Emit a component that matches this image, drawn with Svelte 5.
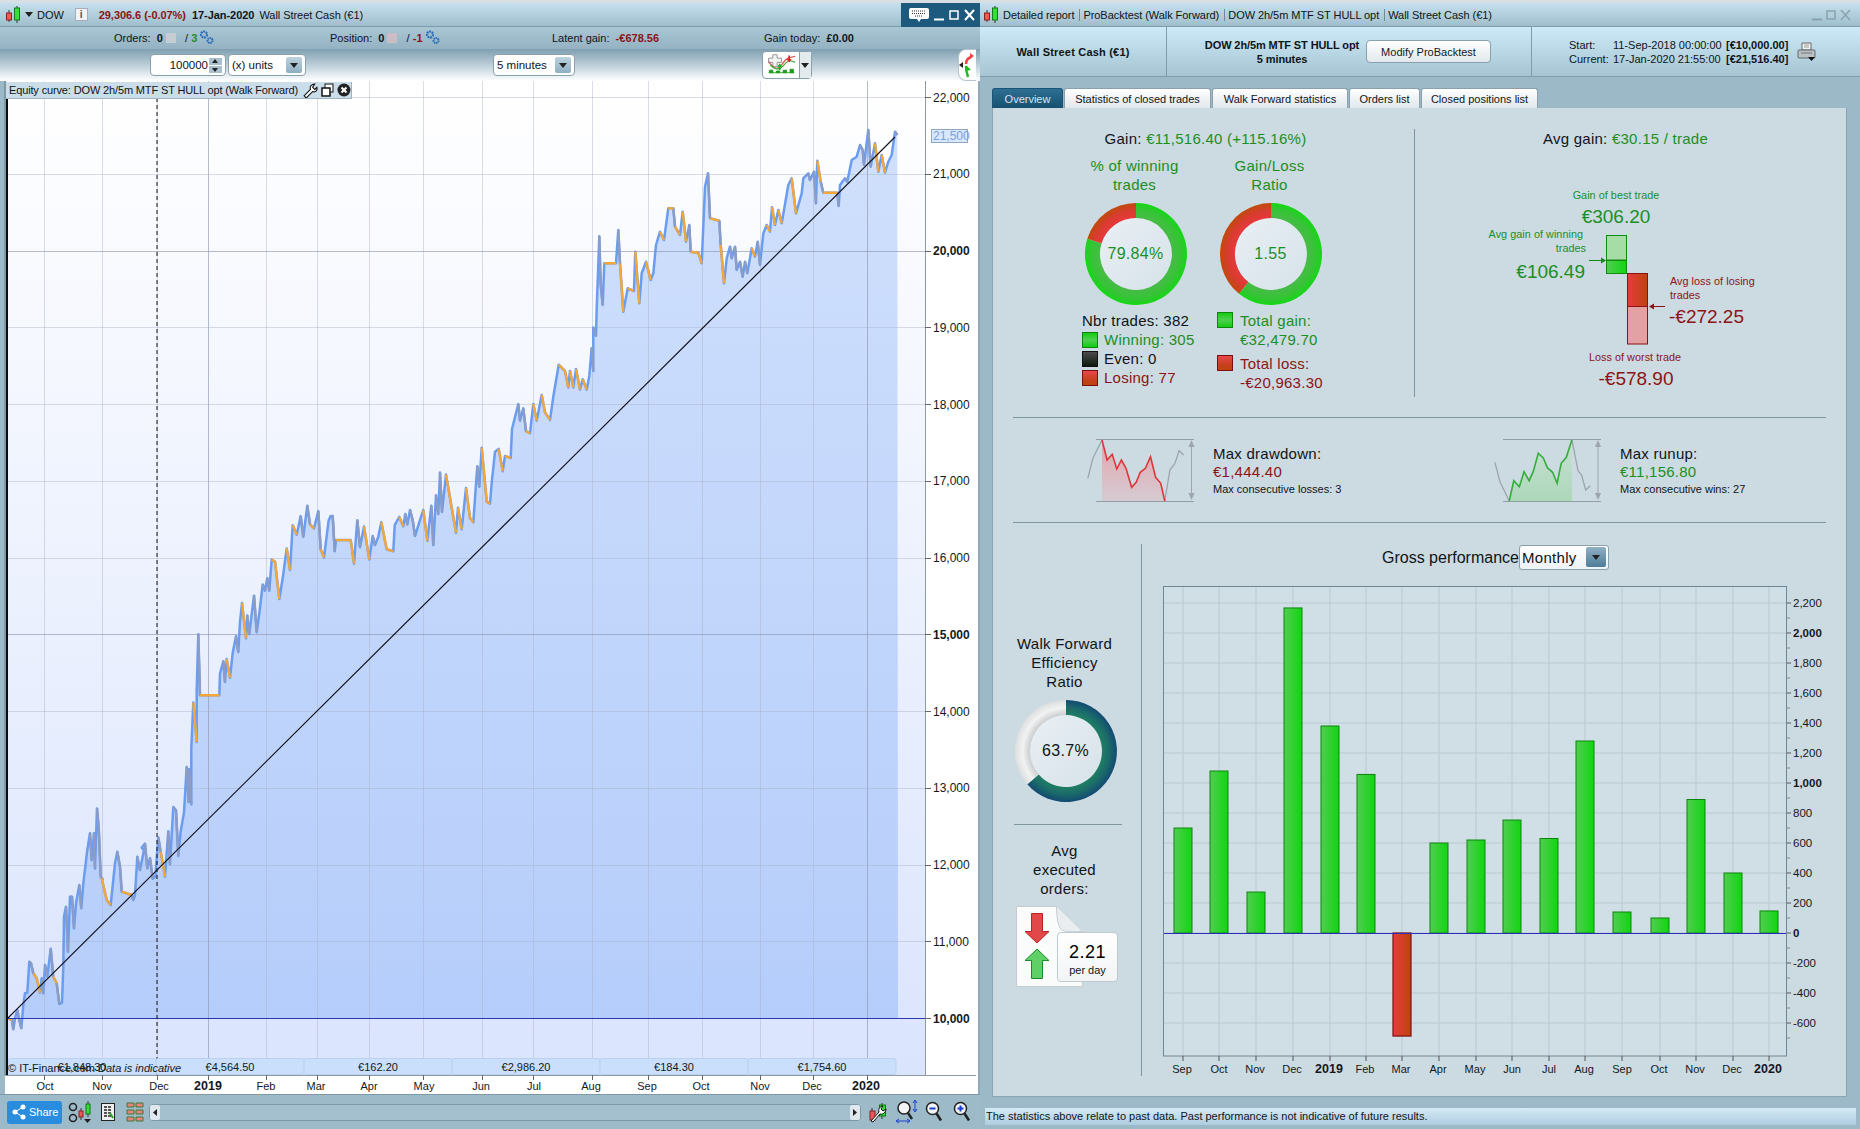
<script>
  const z10 = [24,505,36,510,40,538,45,505,52,480,58,510,64,535,70,465,75,430,82,428,88,335,93,340,100,370,110,385,120,428,125,385,130,430,135,345,142,380,152,296,160,380,170,400,178,462,186,458,190,350,192,200,198,170,204,305,210,140,216,140,222,235,228,160,238,105,244,175,250,100,262,0];
  const a12 = [0,1455,5,1520,12,1455,15,1540,21,1395,26,1440,32,1560,38,1566];
  const b10 = [305,85,320,150,332,165,345,40,352,5,360,50,365,125,395,135,400,150,405,135,412,20,420,60,432,0];
  const c12 = [155,1490,165,1480,172,1540,180,1515,188,1565,196,1560,205,1465,212,1500,225,1560,235,1450,240,1530,250,1392,258,1400,265,1510,272,1450,282,1405,290,1295,296,1380,298,1300,304,1385,304,1250,310,1140,320,1235,320,1110,325,975,330,1122,388,1122,390,1070,400,1040,405,1090,410,1035,420,1080,428,1020,438,980,445,1018,450,945,456,900,468,985,472,930,478,975,492,882,500,970,508,925,518,855,525,870,532,840,538,870,545,795,555,800,568,890,578,840,590,768,600,820,608,712,620,735,632,690,640,740,652,665,660,710,672,720,685,678,692,770,702,790,716,700,722,690,728,690,734,775,738,748,782,748,792,805,802,700,810,765,822,715,838,795,848,738,855,760,865,740,874,705,890,770,910,775,914,712,928,692,940,715,946,685,952,710,960,675,968,700,975,738,990,700,1000,675,1012,750,1024,665,1030,760,1038,640,1045,685,1050,585,1056,680,1068,590,1085,670,1098,730,1104,670,1115,722,1128,622,1140,695,1150,705,1162,570,1168,620,1175,525,1190,655,1200,660,1205,610,1215,535,1226,528,1238,582,1245,545,1262,550,1266,480,1285,420,1290,460,1300,430,1308,485,1320,490,1330,420,1340,460,1355,398,1365,440,1380,458,1390,402,1406,325,1425,340,1435,380,1440,340,1450,380,1458,335,1470,385,1478,360,1490,385,1498,352,1505,285,1510,340,1510,235,1518,255,1520,190,1528,15];
  const d11 = [122,465,128,525,133,400,168,400,175,300,180,400,190,545,203,475,222,483,226,365,238,520,245,430,258,395,272,450,280,430,288,345,300,305,312,330,325,235,340,235,345,290,360,315,368,245,378,335,388,285,392,365,415,368,425,400,435,170,444,130,450,265,478,272,482,345,492,460,500,385,510,350,515,385,525,350,530,420,540,395,548,440,555,395,562,430,575,355,585,380,593,335,600,405,610,310,620,285,630,305,636,232,645,285,655,240,665,280,672,240,685,165,695,145,708,250,725,190,730,145,745,130,750,150,762,125,768,220,772,92,782,155,790,188,832,188,836,228,840,165,855,145,862,155,875,90,890,80,900,45,908,60,912,105,925,0,932,110,945,40,955,125,965,75,975,128,985,95,995,75,1005,5,1012,15];
  function conv(a, f) { const o = []; for (let i = 0; i < a.length; i += 2) o.push(f(a[i], a[i + 1])); return o; }
  const m10 = (x, y) => [x / 3, 850 + y / 3];
  const m12 = (x, y) => [90 + x / 3, 230 + y / 2.412];
  const m11 = (x, y) => [560 + x / 3, 130 + y / 3];
  const curve = [[8, 1018], ...conv(z10, m10), ...conv(a12, m12), ...conv(b10, m10), ...conv(c12, m12), ...conv(d11, m11)];
  const f = (n) => n.toFixed(1);
  const blueD = 'M' + curve.map((p) => f(p[0]) + ' ' + f(p[1])).join('L');
  const areaD = blueD + 'L898 1018L8 1018Z';
  let orangeD = '', greyD = '';
  for (let i = 1; i < curve.length; i++) {
    const [x0, y0] = curve[i - 1], [x1, y1] = curve[i];
    if (y1 >= y0 - 0.5) {
      const seg = `M${f(x0)} ${f(y0)}L${f(x1)} ${f(y1)}`;
      if (x1 - x0 >= 3) orangeD += seg; else greyD += seg;
    }
  }
  const hLines = [22000,21000,20000,19000,18000,17000,16000,15000,14000,13000,12000,11000].map((v) => ({ v, y: 97 + (22000 - v) * 0.07675 }));
  const axisTicks = [...hLines, { v: 10000, y: 1018 }];
  const fmt = (v) => v.toLocaleString('en-US');
  const major = (v) => v === 20000 || v === 15000 || v === 10000;
  const xLabels = [['Oct',45,44],['Nov',102,102],['Dec',159,157],['2019',208,208],['Feb',266,266],['Mar',316,317],['Apr',369,369],['May',424,423],['Jun',481,482],['Jul',534,533],['Aug',591,592],['Sep',647,648],['Oct',701,702],['Nov',760,760],['Dec',812,813],['2020',866,867]];
  const segs = [['€1,848.30',8],['€4,564.50',156],['€162.20',304],['€2,986.20',452],['€184.30',600],['€1,754.60',748]];

  const bars = [['Sep',700],['Oct',1080],['Nov',273],['Dec',2167],['2019',1380],['Feb',1057],['Mar',-687],['Apr',600],['May',620],['Jun',753],['Jul',630],['Aug',1280],['Sep',140],['Oct',100],['Nov',890],['Dec',400],['2020',147]];
  const barX = [1184,1220,1257,1294,1331,1367,1403,1440,1477,1513,1550,1586,1623,1661,1697,1734,1770];
  const barLx = [1183,1220,1256,1293,1330,1366,1402,1439,1476,1513,1550,1585,1623,1660,1696,1733,1769];
  const yVals = [2200,2000,1800,1600,1400,1200,1000,800,600,400,200,0,-200,-400,-600];
  const yOf = (v) => 933 - v * 0.15;
  const minor = [2100,1900,1700,1500,1300,1100,900,700,500,300,100,-100,-300,-500,-700];

  function arc(r0, r1, from, to) {
    const rad = (d) => ((d - 90) * Math.PI) / 180;
    const p = (r, d) => `${f(r * Math.cos(rad(d)))} ${f(r * Math.sin(rad(d)))}`;
    const big = to - from > 180 ? 1 : 0;
    return `M${p(r1, from)}A${r1} ${r1} 0 ${big} 1 ${p(r1, to)}L${p(r0, to)}A${r0} ${r0} 0 ${big} 0 ${p(r0, from)}Z`;
  }
  const sp = (a) => { const o = []; for (let i = 0; i < a.length; i += 2) o.push(`${f(1000 + a[i] / 1.96)},${f(420 + a[i + 1] / 3)}`); return o.join(' '); };
  const s1a = sp([172,175,182,115,200,60]);
  const s1r = sp([200,60,210,120,220,103,229,147,238,120,247,145,258,202,267,187,275,157,285,145,295,110,305,172,315,190,323,243]);
  const s1b = sp([323,243,333,150,343,130,351,92,360,105]);
  const s2a = sp([970,127,980,185,998,243]);
  const s2g = sp([998,243,1007,182,1018,200,1027,155,1037,182,1045,155,1055,100,1065,115,1073,143,1083,157,1092,190,1100,130,1110,112,1121,60]);
  const s2b = sp([1121,60,1133,153,1140,165,1148,210,1157,197]);
</script>

{#snippet donut(value, cls, a, b, split)}
  <div class="donut">
    <svg width="104" height="104" viewBox="-52 -52 104 104">
      <circle r="37" fill="url(#dcenter)" />
      <path d={arc(36, 51, 0, split)} fill={`url(#${a})`} />
      <path d={arc(36, 51, split, 359.99)} fill={`url(#${b})`} />
    </svg>
    <span class={cls}>{value}</span>
  </div>
{/snippet}

{#snippet candle()}
  <svg class="candle" width="17" height="20" viewBox="0 0 17 20">
    <path d="M4 5v12M12 1v17" stroke="#333" stroke-width="1" />
    <rect x="1.5" y="8" width="5" height="7" fill="#ef5a50" stroke="#8a2020" />
    <rect x="9.5" y="3" width="5" height="12" fill="#33e03a" stroke="#157a1a" />
  </svg>
{/snippet}

{#snippet gears()}
  <svg class="gears" width="16" height="16" viewBox="0 0 16 16">
    <circle cx="6" cy="5.500" r="3" fill="none" stroke="#2468b8" stroke-width="2.200" stroke-dasharray="1.800 .8" />
    <circle cx="12" cy="11.500" r="2.500" fill="none" stroke="#2468b8" stroke-width="2" stroke-dasharray="1.500 .7" />
  </svg>
{/snippet}

{#snippet ddArrow()}
  <span class="ddbtn"><svg width="8" height="5" viewBox="0 0 8 5"><path d="M0 0h8L4 5z" fill="#222" /></svg></span>
{/snippet}

<svg class="defs" aria-hidden="true">
  <defs>
    <radialGradient id="dgreen" gradientUnits="userSpaceOnUse" cx="0" cy="0" r="51"><stop offset=".7" stop-color="#48bb48" /><stop offset=".88" stop-color="#35c435" /><stop offset="1" stop-color="#14d814" /></radialGradient>
    <radialGradient id="dred" gradientUnits="userSpaceOnUse" cx="0" cy="0" r="51"><stop offset=".7" stop-color="#e8383c" /><stop offset=".85" stop-color="#d83c30" /><stop offset="1" stop-color="#c04a0c" /></radialGradient>
    <radialGradient id="dteal" gradientUnits="userSpaceOnUse" cx="0" cy="0" r="51"><stop offset=".7" stop-color="#1f7f62" /><stop offset=".85" stop-color="#1a6a6a" /><stop offset="1" stop-color="#134a72" /></radialGradient>
    <radialGradient id="dgrey" gradientUnits="userSpaceOnUse" cx="0" cy="0" r="51"><stop offset=".7" stop-color="#c9cccd" /><stop offset=".85" stop-color="#f2f2f2" /><stop offset="1" stop-color="#dcdfe0" /></radialGradient>
    <linearGradient id="dcenter" x1="0" y1="0" x2="1" y2="1"><stop offset="0" stop-color="#e9f0f5" /><stop offset="1" stop-color="#d6e1e9" /></linearGradient>
    <linearGradient id="plotbg" x1="0" y1="0" x2="0" y2="1"><stop offset="0" stop-color="#ffffff" /><stop offset="1" stop-color="#dae4fd" /></linearGradient>
    <linearGradient id="areabg" x1="0" y1="0" x2="0" y2="1"><stop offset="0" stop-color="#d0e0fc" /><stop offset="1" stop-color="#b5cdfb" /></linearGradient>
    <linearGradient id="bgreen"><stop offset="0" stop-color="#52cd52" /><stop offset="1" stop-color="#10d510" /></linearGradient>
    <linearGradient id="bred"><stop offset="0" stop-color="#e63c3e" /><stop offset="1" stop-color="#bd430c" /></linearGradient>
    <linearGradient id="sred" x1="0" y1="0" x2="0" y2="1"><stop offset="0" stop-color="#e3a5ab" /><stop offset="1" stop-color="#d6cbd3" /></linearGradient>
    <linearGradient id="sgreen" x1="0" y1="0" x2="0" y2="1"><stop offset="0" stop-color="#c9dfd6" /><stop offset="1" stop-color="#acd8b8" /></linearGradient>
  </defs>
</svg>

<div class="root">
  <section class="wleft">
    <div class="titlebar">
      <span class="m6">{@render candle()}</span>
      <svg class="m3" width="8" height="5" viewBox="0 0 8 5"><path d="M0 0h8L4 5z" fill="#222" /></svg>
      <span class="m4">DOW</span>
      <span class="info">i</span>
      <b class="red m12">29,306.6 (-0.07%)</b>
      <b class="m8">17-Jan-2020</b>
      <span class="m5">Wall Street Cash (€1)</span>
      <span class="winctl dark">
        <svg width="20" height="14" viewBox="0 0 20 14"><rect width="20" height="11" rx="2" fill="#fff" /><path d="M3 3h14M3 5.500h14M6 8h8" stroke="#333" stroke-dasharray="1 1" /><path d="M8 11h4l-2 3z" fill="#fff" /></svg>
        <svg width="10" height="12" viewBox="0 0 10 12"><path d="M0 10.500h10" stroke="#fff" stroke-width="2" /></svg>
        <svg width="10" height="12" viewBox="0 0 10 12"><rect x="1" y="2" width="8" height="8" fill="none" stroke="#fff" stroke-width="1.500" /></svg>
        <svg width="11" height="12" viewBox="0 0 11 12"><path d="M1 1l9 10M10 1L1 11" stroke="#fff" stroke-width="2" /></svg>
      </span>
    </div>
    <div class="orders">
      <span class="og g1">Orders: &nbsp;<b>0</b><i class="xbox"></i>&nbsp;&nbsp;&nbsp;/ <b class="grn3">3</b>{@render gears()}</span>
      <span class="og g2">Position: &nbsp;<b>0</b><i class="xbox pink"></i>&nbsp;&nbsp;&nbsp;/ <b class="red">-1</b>{@render gears()}</span>
      <span class="og g3">Latent gain: &nbsp;<b class="red">-€678.56</b></span>
      <span class="og">Gain today: &nbsp;<b>£0.00</b></span>
    </div>
    <div class="toolbar">
      <span class="field f1"><span class="num">100000</span><span class="spin"><i></i><i class="dn"></i></span></span>
      <span class="field f2"><span>(x) units</span>{@render ddArrow()}</span>
      <span class="field f3"><span>5 minutes</span>{@render ddArrow()}</span>
      <span class="indic">
        <svg width="36" height="26" viewBox="0 0 36 26"><path d="M3 5h5V1h5v4h5v5h-5v5H8v-5H3z" fill="#f4f4f4" stroke="#888" /><path d="M3 9c6 8 10 11 15 4s6-8 16-10" fill="none" stroke="#d55" stroke-width="1.500" /><path d="M5 13c6 6 11 6 15 1s7-8 14-4" fill="none" stroke="#4a4" stroke-width="1.500" /><path d="M3 22h30M4 19h4v3H4zM12 20h4v2h-4zM20 19h4v3h-4zM28 18h4v4h-4z" stroke="#1a9a1a" fill="#1a9a1a" /><path d="M24 6l3 4 3-4h-2V2h-2v4z" fill="#d22" /><path d="M13 15l3-4 3 4h-2v4h-2v-4z" fill="#2a2" /></svg>
        <span class="indicdd"><svg width="8" height="5" viewBox="0 0 8 5"><path d="M0 0h8L4 5z" fill="#222" /></svg></span>
      </span>
      <span class="sidetab"><svg width="16" height="30" viewBox="0 0 16 30"><path d="M0 15l4-3v6z" fill="#222" /><path d="M7 14c0-4 2-6 5-7" fill="none" stroke="#e44" stroke-width="2.500" /><path d="M11 3l4 3-4 3z" fill="#e44" /><path d="M7 16c0 5 1 8 2 11" fill="none" stroke="#2b2" stroke-width="2.500" /><path d="M8 16l4 4-6 1z" fill="#2b2" /></svg></span>
    </div>
    <div class="chart">
      <svg class="plot" width="978" height="1013" viewBox="0 81 978 1013">
        <rect x="0" y="81" width="978" height="1013" fill="#fff" />
        <rect x="8" y="81" width="917" height="994" fill="url(#plotbg)" />
        <path d={areaD} fill="url(#areabg)" />
        {#each xLabels as l}
          <line x1={l[2] + 0.5} x2={l[2] + 0.5} y1="81" y2="1075" stroke={l[0].length === 4 ? '#8f96b0' : '#a6adc4'} stroke-opacity={l[0].length === 4 ? 0.65 : 0.42} />
        {/each}
        {#each hLines as h}
          <line x1="8" x2="925" y1={Math.round(h.y) + 0.5} y2={Math.round(h.y) + 0.5} stroke={major(h.v) ? '#8f96b0' : '#a6adc4'} stroke-opacity={major(h.v) ? 0.65 : 0.42} />
        {/each}
        <path d={blueD} fill="none" stroke="#6a9cf0" stroke-width="2.500" stroke-linejoin="round" />
        <path d={greyD} fill="none" stroke="#8c9cc4" stroke-width="2.400" />
        <path d={orangeD} fill="none" stroke="#f3a73a" stroke-width="2.400" />
        <line x1="8" y1="1018" x2="895" y2="137" stroke="#101018" stroke-width="1.100" />
        <line x1="8" x2="925" y1="1018.500" y2="1018.500" stroke="#2a35ae" stroke-width="1.200" />
        <line x1="157" x2="157" y1="98" y2="1075" stroke="#111" stroke-dasharray="4 3" />
        {#each segs as s}
          <rect x={s[1]} y="1058.500" width="148" height="16" rx="2" fill="#c9dffb" stroke="#b9d2f0" />
          <text class="t11" x={s[1] + 74} y="1071" text-anchor="middle">{s[0]}</text>
        {/each}
        <text class="t11" x="8" y="1072">© IT-Finance.com <tspan font-style="italic">Data is indicative</tspan></text>
        <rect x="0" y="81" width="5" height="1013" fill="#9cb9c8" />
        <rect x="4" y="81" width="2" height="994" fill="#7f9aa6" />
        <rect x="6" y="99" width="2" height="976" fill="#0c0c0c" />
        <line x1="5" x2="976" y1="1075.500" y2="1075.500" stroke="#8b9aa3" />
        <line x1="925.500" x2="925.500" y1="81" y2="1075" stroke="#8b9aa3" />
        {#each axisTicks as t}
          <line x1="925" x2="931" y1={Math.round(t.y) + 0.5} y2={Math.round(t.y) + 0.5} stroke="#666" />
          <text class={major(t.v) ? 'axb' : 'ax'} x="933" y={t.y + 4.500}>{fmt(t.v)}</text>
        {/each}
        <rect x="931.500" y="129.500" width="36" height="13" fill="#d9e8fb" stroke="#8ea8c2" />
        <text class="ax blue" x="933" y="140">21,500</text>
        {#each xLabels as l}
          <line x1={l[2] + 0.5} x2={l[2] + 0.5} y1="1075" y2="1080" stroke="#666" />
          <text class={l[0].length === 4 ? 'xb' : 't11'} x={l[1]} y="1090" text-anchor="middle">{l[0]}</text>
        {/each}
      </svg>
      <div class="eqtitle">
        <span class="eqt">Equity curve: DOW 2h/5m MTF ST HULL opt (Walk Forward)</span>
        <svg width="15" height="15" viewBox="0 0 14 14"><path d="M1 12l6-6c-1-3 1-5 4-5l-2 3 2 2 2-2c1 3-2 5-4 4l-6 6z" fill="#fff" stroke="#111" /></svg>
        <svg width="13" height="14" viewBox="0 0 13 14"><rect x="4" y="1" width="8" height="8" fill="#fff" stroke="#111" /><rect x="1" y="5" width="8" height="8" fill="#fff" stroke="#111" stroke-width="1.500" /></svg>
        <svg width="14" height="14" viewBox="0 0 14 14"><circle cx="7" cy="7" r="6.500" fill="#222" /><path d="M4.500 4.500l5 5M9.500 4.500l-5 5" stroke="#fff" stroke-width="2" /></svg>
      </div>
    </div>
    <div class="bottombar">
      <span class="share"><svg width="14" height="16" viewBox="0 0 14 16"><circle cx="11" cy="3" r="2.500" fill="#fff" /><circle cx="3" cy="8" r="2.500" fill="#fff" /><circle cx="11" cy="13" r="2.500" fill="#fff" /><path d="M11 3L3 8l8 5" fill="none" stroke="#fff" /></svg>Share</span>
      <svg class="bi1" width="24" height="26" viewBox="0 0 24 26"><circle cx="5" cy="8" r="3.500" fill="none" stroke="#222" stroke-width="1.500" /><circle cx="5" cy="19" r="3.500" fill="none" stroke="#222" stroke-width="1.500" /><path d="M13 9v12M20 2v16" stroke="#333" /><rect x="11" y="12" width="4" height="6" fill="#e55" stroke="#822" /><rect x="18" y="5" width="4" height="10" fill="#3d3" stroke="#171" /><path d="M16 20h7l-3.500 4z" fill="#222" /></svg>
      <svg class="bi2" width="14" height="18" viewBox="0 0 14 18"><rect x=".5" y=".5" width="13" height="17" fill="#eee" stroke="#222" /><path d="M3 4h8M3 7h8M3 10h8M3 13h8" stroke="#222" stroke-width="1.500" stroke-dasharray="3 1" /><path d="M9 10l3 5" stroke="#2a2" stroke-width="2" /></svg>
      <svg class="bi3" width="18" height="20" viewBox="0 0 18 20"><path d="M1 1h7v4H1zM10 1h7v4h-7zM1 8h7v4H1zM10 8h7v4h-7zM1 15h7v4H1zM10 15h7v4h-7z" fill="#e8837a" stroke="#3a7a3a" /></svg>
      <div class="scroll">
        <span class="sb"><svg width="4" height="7" viewBox="0 0 4 7"><path d="M4 0v7L0 3.500z" fill="#222" /></svg></span>
        <span class="sb"><svg width="4" height="7" viewBox="0 0 4 7"><path d="M0 0v7l4-3.500z" fill="#222" /></svg></span>
      </div>
      <svg class="bi4" width="18" height="26" viewBox="0 0 18 26"><path d="M3 9v14M13 4v16" stroke="#333" /><rect x="1" y="12" width="5" height="9" fill="#e55" stroke="#822" /><rect x="10.500" y="6" width="6" height="11" fill="#3d3" stroke="#171" /><path d="M2 22l8-9c-1-3 1-6 4-6l-2 3 2 2 3-2c0 3-3 6-6 5l-7 8z" fill="#fff" stroke="#111" /></svg>
      <svg class="bi5" width="22" height="24" viewBox="0 0 22 24"><circle cx="8" cy="8" r="6" fill="#f2f4f6" stroke="#222" stroke-width="1.500" /><path d="M12 13l4 6" stroke="#222" stroke-width="2.500" /><path d="M19 1v10M17 3l2-3 2 3M17 9l2 3 2-3M1 21h12M3 19l-3 2 3 2M11 19l3 2-3 2" stroke="#1a3fd0" fill="none" /></svg>
      <svg class="bi6" width="18" height="22" viewBox="0 0 18 22"><circle cx="7.500" cy="7.500" r="6" fill="#f2f4f6" stroke="#222" stroke-width="1.500" /><path d="M11.500 12.500l4.500 7" stroke="#222" stroke-width="2.500" /><path d="M4.500 7.500h6" stroke="#1a3fd0" stroke-width="2" /></svg>
      <svg class="bi7" width="18" height="22" viewBox="0 0 18 22"><circle cx="7.500" cy="7.500" r="6" fill="#f2f4f6" stroke="#222" stroke-width="1.500" /><path d="M11.500 12.500l4.500 7" stroke="#222" stroke-width="2.500" /><path d="M4.500 7.500h6M7.500 4.500v6" stroke="#1a3fd0" stroke-width="2" /></svg>
    </div>
  </section>

  <section class="wright">
    <div class="titlebar rt">
      <span class="m4b">{@render candle()}</span>
      <span class="crumb">Detailed report</span><span class="crumb">ProBacktest (Walk Forward)</span><span class="crumb">DOW 2h/5m MTF ST HULL opt</span><span class="crumb last">Wall Street Cash (€1)</span>
      <span class="winctl grey">
        <svg width="10" height="12" viewBox="0 0 10 12"><path d="M0 10.500h10" stroke="#8ba2ae" stroke-width="2" /></svg>
        <svg width="10" height="12" viewBox="0 0 10 12"><rect x="1" y="2" width="8" height="8" fill="none" stroke="#8ba2ae" stroke-width="1.500" /></svg>
        <svg width="11" height="12" viewBox="0 0 11 12"><path d="M1 1l9 10M10 1L1 11" stroke="#8ba2ae" stroke-width="1.500" /></svg>
      </span>
    </div>
    <div class="rhead">
      <div class="cell c1"><b class="wsc">Wall Street Cash (€1)</b></div>
      <div class="cell c2">
        <b class="sys">DOW 2h/5m MTF ST HULL opt<br />5 minutes</b>
        <button class="modify">Modify ProBacktest</button>
      </div>
      <div class="cell c3">
        <div class="dates">
          <span>Start:</span><span class="dr">11-Sep-2018 00:00:00</span><b>[€10,000.00]</b>
          <span>Current:</span><span class="dr">17-Jan-2020 21:55:00</span><b>[€21,516.40]</b>
        </div>
        <svg class="printer" width="20" height="20" viewBox="0 0 20 20"><path d="M5 1h9v7H5z" fill="#f4f4f4" stroke="#666" /><path d="M7 3h5M7 5h5" stroke="#999" /><rect x="1" y="8" width="17" height="8" rx="1" fill="#b9c0c4" stroke="#666" /><path d="M4 11h11" stroke="#777" /><path d="M11 15h7l-3.500 4z" fill="#111" /></svg>
      </div>
    </div>
    <div class="tabs">
      <span class="tab on">Overview</span>
      <span class="tab w1">Statistics of closed trades</span>
      <span class="tab w2">Walk Forward statistics</span>
      <span class="tab w3">Orders list</span>
      <span class="tab w4">Closed positions list</span>
    </div>
    <div class="panel">
      <div class="top">
        <div class="gaincol">
          <div class="line gainl">Gain: <span class="g">€11,516.40 (+115.16%)</span></div>
          <div class="two">
            <div class="col">
              <div class="ttl g">% of winning<br />trades</div>
              {@render donut('79.84%', 'dv g', 'dgreen', 'dred', 287.4)}
              <div class="lst">
                <div class="lr">Nbr trades: 382</div>
                <div class="lr"><i class="sq sg"></i><span class="g">Winning: 305</span></div>
                <div class="lr"><i class="sq sk"></i><span>Even: 0</span></div>
                <div class="lr"><i class="sq sr"></i><span class="r">Losing: 77</span></div>
              </div>
            </div>
            <div class="col">
              <div class="ttl g">Gain/Loss<br />Ratio</div>
              {@render donut('1.55', 'dv g', 'dgreen', 'dred', 218.8)}
              <div class="lst">
                <div class="lr2"><i class="sq sg"></i><span class="g">Total gain:<br />€32,479.70</span></div>
                <div class="lr2 gapt"><i class="sq sr"></i><span class="r">Total loss:<br />-€20,963.30</span></div>
              </div>
            </div>
          </div>
        </div>
        <div class="avgcol">
          <div class="line avgl">Avg gain: <span class="g">€30.15 / trade</span></div>
          <svg class="diag" width="431" height="240" viewBox="1416 158 431 240">
            <text class="d11 gf" x="1617" y="198" text-anchor="middle">Gain of best trade</text>
            <text class="d19 gf" x="1617" y="222" text-anchor="middle">€306.20</text>
            <text class="d11 gf" x="1584" y="237" text-anchor="end">Avg gain of winning</text>
            <text class="d11 gf" x="1587" y="251" text-anchor="end">trades</text>
            <text class="d19 gf" x="1586" y="277" text-anchor="end">€106.49</text>
            <rect x="1607.500" y="234.500" width="20" height="24.500" fill="#a6dca6" stroke="#128a12" />
            <rect x="1607.500" y="259.500" width="20" height="13" fill="url(#bgreen)" stroke="#128a12" />
            <path d="M1590 259.500h13" stroke="#128a12" /><path d="M1607 259.500l-5-3v6z" fill="#128a12" />
            <rect x="1628.500" y="272.500" width="20" height="33" fill="url(#bred)" stroke="#8a1212" />
            <rect x="1628.500" y="305.500" width="20" height="37.500" fill="#e2a2a4" stroke="#8a1212" />
            <path d="M1653 305.500h13" stroke="#8a1212" /><path d="M1650 305.500l5-3v6z" fill="#8a1212" />
            <text class="d11 rf" x="1671" y="284">Avg loss of losing</text>
            <text class="d11 rf" x="1671" y="298">trades</text>
            <text class="d19 rf" x="1670" y="322">-€272.25</text>
            <text class="d11 rf" x="1636" y="360" text-anchor="middle">Loss of worst trade</text>
            <text class="d19 rf" x="1637" y="384" text-anchor="middle">-€578.90</text>
          </svg>
        </div>
      </div>
      <div class="hr"></div>
      <div class="mid">
        <div class="mitem i1">
          <svg width="112" height="70" viewBox="1085 435 112 70">
            <polygon points={`${s1r} 1164.800,501 1102,501`} fill="url(#sred)" />
            <path d="M1096 439.500h98M1096 501.500h98" stroke="#949ea5" stroke-width="1.200" />
            <polyline points={s1a} fill="none" stroke="#9ca5ab" stroke-width="1.300" />
            <polyline points={s1b} fill="none" stroke="#9ca5ab" stroke-width="1.300" />
            <polyline points={s1r} fill="none" stroke="#e0363a" stroke-width="1.600" />
            <path d="M1191.500 443v54" stroke="#9ca5ab" /><path d="M1191.500 440l3 7h-6zM1191.500 500l3-7h-6z" fill="#9ca5ab" />
          </svg>
          <div class="mtxt"><div class="ml">Max drawdown:</div><div class="ml r">€1,444.40</div><div class="ms">Max consecutive losses: 3</div></div>
        </div>
        <div class="mitem">
          <svg width="112" height="70" viewBox="1492 435 112 70">
            <polygon points={`${s2g} 1572,501 1509,501`} fill="url(#sgreen)" />
            <path d="M1503 439.500h98M1503 501.500h98" stroke="#949ea5" stroke-width="1.200" />
            <polyline points={s2a} fill="none" stroke="#9ca5ab" stroke-width="1.300" />
            <polyline points={s2b} fill="none" stroke="#9ca5ab" stroke-width="1.300" />
            <polyline points={s2g} fill="none" stroke="#34ad3a" stroke-width="1.600" />
            <path d="M1598 443v54" stroke="#9ca5ab" /><path d="M1598 440l3 7h-6zM1598 500l3-7h-6z" fill="#9ca5ab" />
          </svg>
          <div class="mtxt"><div class="ml">Max runup:</div><div class="ml g">€11,156.80</div><div class="ms">Max consecutive wins: 27</div></div>
        </div>
      </div>
      <div class="hr"></div>
      <div class="bot">
        <div class="wf">
          <div class="ttl">Walk Forward<br />Efficiency<br />Ratio</div>
          <div class="wfd">{@render donut('63.7%', 'dv', 'dteal', 'dgrey', 229.3)}</div>
          <div class="wfhr"></div>
          <div class="ttl avgo">Avg<br />executed<br />orders:</div>
          <div class="doc">
            <svg width="68" height="82" viewBox="0 0 68 82">
              <path d="M.5.500h40l26 25v55H.5z" fill="#fafbfb" stroke="#c4ccd1" />
              <path d="M40.500.500c0 12 2 22 6 24 6 2 14 1 20 1" fill="#e9edf0" stroke="#c4ccd1" />
              <path d="M15.500 7.500h11v18H33L21 37 9 25.500h6.500z" fill="#e2484a" stroke="#b22" />
              <path d="M15.500 72.500h11v-18H33L21 43 9 54.500h6.500z" fill="#5fd065" stroke="#1a8a2a" />
            </svg>
            <div class="bubble"><b>2.21</b><span>per day</span></div>
          </div>
        </div>
        <div class="gross">
          <div class="grow"><span class="glab">Gross performance</span><span class="sel"><span class="mth">Monthly</span>{@render ddArrow()}</span></div>
          <svg width="704" height="510" viewBox="1143 570 704 510">
            <rect x="1164.500" y="586.500" width="623" height="469.500" fill="#d0dee6" />
            {#each yVals as v}
              <line x1="1165" x2="1788" y1={yOf(v)} y2={yOf(v)} stroke="#bac9d2" />
            {/each}
            {#each barX as x}
              <line x1={x} x2={x} y1="587" y2="1056" stroke="#bac9d2" />
            {/each}
            {#each bars as b, i}
              {#if b[1] > 0}
                <rect x={barX[i] - 9} y={yOf(b[1])} width="18" height={b[1] * 0.15} fill="url(#bgreen)" stroke="#0d860d" />
              {:else}
                <rect x={barX[i] - 9} y="933" width="18" height={-b[1] * 0.15} fill="url(#bred)" stroke="#7d1010" stroke-width="1.200" />
              {/if}
            {/each}
            <line x1="1165" x2="1788" y1="933.500" y2="933.500" stroke="#2b2cc0" stroke-width="1.200" />
            <rect x="1164.500" y="586.500" width="623" height="469.500" fill="none" stroke="#6f8794" />
            {#each yVals as v}
              <line x1="1788" x2="1792" y1={yOf(v)} y2={yOf(v)} stroke="#555" />
              <text class={v === 0 || v === 1000 || v === 2000 ? 'byb' : 'by'} x="1794" y={yOf(v) + 4}>{v === 0 ? '0' : fmt(v)}</text>
            {/each}
            {#each minor as v}
              <line x1="1788" x2="1791" y1={yOf(v)} y2={yOf(v)} stroke="#888" />
            {/each}
            {#each bars as b, i}
              <line x1={barX[i]} x2={barX[i]} y1="1056" y2="1061" stroke="#555" />
              <text class={b[0].length === 4 ? 'xb' : 't11'} x={barLx[i]} y="1073" text-anchor="middle">{b[0]}</text>
            {/each}
          </svg>
        </div>
      </div>
    </div>
    <div class="status">The statistics above relate to past data. Past performance is not indicative of future results.</div>
  </section>
</div>

<style>
  :global(body) { margin: 0; background: #d8dfe4; font-family: "Liberation Sans", Arial, sans-serif; font-size: 11px; color: #101418; }
  .defs { position: absolute; width: 0; height: 0; }
  .root { display: flex; width: 1860px; height: 1129px; padding-top: 3px; box-sizing: border-box; overflow: hidden; background: #d8dfe4; }
  .wleft { width: 980px; height: 1126px; flex: none; display: flex; flex-direction: column; background: #8fabba; }
  .wright { width: 880px; height: 1126px; display: flex; flex-direction: column; background: #9cb9c8; }

  .titlebar { height: 24px; flex: none; display: flex; align-items: center; background: linear-gradient(#c6e0ed, #9fbecd); border-bottom: 1px solid #7f9cab; box-sizing: border-box; position: relative; letter-spacing: -.05px; }
  .m6 { margin-left: 5px; display: flex; } .m3 { margin-left: 3px; } .m4 { margin-left: 4px; } .m12 { margin-left: 11px; } .m8 { margin-left: 6px; } .m5 { margin-left: 5px; }
  .red { color: #8c1414; }
  .info { margin-left: 11px; width: 11px; height: 11px; background: #f0f3f5; border: 1px solid #aab; text-align: center; line-height: 11px; font-size: 10px; font-weight: bold; color: #555; box-sizing: content-box; }
  .winctl { position: absolute; right: 0; top: 0; height: 24px; display: flex; align-items: center; gap: 5px; padding: 0 3px 0 6px; box-sizing: border-box; }
  .dark { background: #1d5a7e; width: 79px; padding-left: 8px; }
  .grey { right: 6px; gap: 4px; }
  .orders { height: 22px; flex: none; display: flex; align-items: center; padding-left: 114px; background: linear-gradient(#a9c6d4, #94b2c2); box-sizing: border-box; }
  .og { display: flex; align-items: center; white-space: pre; }
  .g1 { width: 216px; } .g2 { width: 222px; } .g3 { width: 212px; }
  .grn3 { color: #2a8a2a; }
  .gears { margin-left: 1px; margin-bottom: 2px; }
  .xbox { width: 10px; height: 10px; background: #c5cdd2; margin-left: 3px; display: inline-block; }
  .pink { background: #ccbcc6; }
  .toolbar { height: 32px; flex: none; display: flex; align-items: center; background: linear-gradient(#7f9fb1, #c9d8e0 60%, #fff); position: relative; border-bottom: 0; box-sizing: border-box; }
  .field { height: 22px; box-sizing: border-box; background: #fff; border: 1px solid #8aa0ad; border-radius: 4px; display: flex; align-items: center; padding-left: 3px; justify-content: space-between; font-size: 11.500px; }
  .f1 { margin-left: 150px; width: 76px; padding-left: 0; }
  .num { flex: 1; text-align: right; padding-right: 1px; }
  .spin { width: 13px; display: flex; flex-direction: column; gap: 1px; margin-right: 3px; }
  .spin i { height: 7px; background: #a8c0ce; position: relative; display: block; }
  .spin i::after { content: ""; position: absolute; left: 3px; top: 1px; border: 3px solid transparent; border-top: 0; border-bottom: 4px solid #222; }
  .spin .dn::after { border-bottom: 0; border-top: 4px solid #222; top: 2px; }
  .f2 { margin-left: 2px; width: 78px; }
  .f3 { margin-left: 187px; width: 82px; }
  .ddbtn { width: 16px; height: 16px; margin-right: 3px; background: linear-gradient(#bcd2de, #8fb0c2); border-radius: 2px; display: flex; align-items: center; justify-content: center; }
  .indic { margin-left: 187px; width: 50px; height: 28px; box-sizing: border-box; background: #fff; border: 1px solid #8aa0ad; border-radius: 4px; display: flex; align-items: center; padding-left: 3px; }
  .indicdd { width: 13px; height: 26px; margin-left: 2px; background: #e3eaee; border-left: 1px solid #8aa0ad; display: flex; align-items: center; justify-content: center; }
  .sidetab { margin-left: 146px; width: 18px; height: 32px; background: #fff; border: 1px solid #b5c4ce; border-right: 0; border-radius: 8px 0 0 8px; box-sizing: border-box; display: flex; align-items: center; }

  .chart { height: 1013px; flex: none; position: relative; }
  .plot { display: block; }
  .plot text, .gross text { font-family: "Liberation Sans", Arial, sans-serif; fill: #14181c; }
  .t11 { font-size: 11px; }
  .ax { font-size: 12px; } .axb { font-size: 12px; font-weight: bold; }
  .plot text.blue { fill: #7ba0e2; }
  .xb { font-size: 12.500px; font-weight: bold; }
  .eqtitle { position: absolute; left: 6px; top: 1px; height: 17px; width: 346px; box-sizing: border-box; display: flex; align-items: center; gap: 3px; padding-left: 3px; background: #cbdde8; border: 1px solid #9cb3c1; border-top: 0; border-left: 0; font-size: 11px; white-space: nowrap; }
  .eqt { letter-spacing: -.14px; margin-right: 2px; }

  .bottombar { height: 35px; flex: none; display: flex; align-items: center; background: #9dbac9; border-top: 1px solid #7d98a6; box-sizing: border-box; }
  .share { margin-left: 7px; width: 55px; height: 23px; background: #2a8cdc; border-radius: 3px; color: #fff; display: flex; align-items: center; gap: 3px; padding-left: 5px; box-sizing: border-box; font-size: 11px; }
  .bi1 { margin-left: 6px; } .bi2 { margin-left: 9px; } .bi3 { margin-left: 11px; }
  .scroll { margin-left: 5px; width: 712px; height: 17px; box-sizing: border-box; border: 1px solid #7d98a6; border-radius: 4px; display: flex; justify-content: space-between; align-items: center; background: #a4bfcd; }
  .sb { width: 10px; height: 15px; background: #dfe8ed; display: flex; align-items: center; justify-content: center; border-radius: 2px; }
  .bi4 { margin-left: 8px; } .bi5 { margin-left: 9px; } .bi6 { margin-left: 7px; } .bi7 { margin-left: 10px; }

  .m4b { margin-left: 3px; display: flex; }
  .crumb { padding: 0 5px 0 3px; border-right: 1px solid #6f8a98; line-height: 12px; white-space: nowrap; }
  .crumb.last { border: 0; }
  .rhead { height: 50px; flex: none; display: flex; background: linear-gradient(#cdeaf8, #a6c4d2); border-bottom: 1px solid #7f9cab; box-sizing: border-box; }
  .cell { box-sizing: border-box; height: 49px; display: flex; align-items: center; border-right: 1px solid #7f9cab; }
  .c1 { width: 187px; justify-content: center; }
  .wsc { letter-spacing: .2px; }
  .c2 { width: 365px; padding-left: 37px; }
  .c3 { flex: 1; border: 0; padding-left: 37px; }
  .sys { width: 156px; text-align: center; line-height: 14px; white-space: nowrap; letter-spacing: -.1px; }
  .modify { margin-left: 6px; width: 125px; height: 23px; border: 1px solid #8aa0ad; border-radius: 4px; background: linear-gradient(#fff, #e2e8ec); font: 11px "Liberation Sans", Arial, sans-serif; color: #14181c; padding: 0; }
  .dates { display: grid; grid-template-columns: 44px 107px 61px; column-gap: 0; row-gap: 2px; white-space: nowrap; }
  .dates b { padding-left: 6px; box-sizing: border-box; width: 67px; }
  .dr { text-align: right; }
  .printer { margin-left: 16px; }
  .tabs { height: 31px; flex: none; box-sizing: border-box; padding: 11px 0 0 12px; display: flex; gap: 0; }
  .tab { height: 20px; line-height: 20px; box-sizing: border-box; text-align: center; background: linear-gradient(#fff, #e0e7eb); border: 1px solid #8aa0ad; border-bottom: 0; border-radius: 3px 3px 0 0; margin-right: 1px; }
  .tab.on { width: 71px; background: linear-gradient(#2d6f93, #175070); color: #d6e6ef; border-color: #1a5577; }
  .w1 { width: 147px; } .w2 { width: 136px; } .w3 { width: 71px; } .w4 { width: 117px; }
  .panel { width: 855px; height: 989px; margin-left: 12px; flex: none; box-sizing: border-box; background: #ccdae2; border: 1px solid #8ba4b2; border-top: 0; display: flex; flex-direction: column; }
  .top { height: 309px; flex: none; display: flex; box-sizing: border-box; padding-top: 21px; }
  .gaincol { width: 423px; height: 268px; border-right: 1px solid #7f95a3; box-sizing: border-box; }
  .line { font-size: 15px; line-height: 19px; letter-spacing: .25px; text-align: center; }
  .gainl { padding-left: 4px; }
  .g { color: #1b8f25; } .r { color: #8c1414; }
  .two { margin-top: 8px; padding-left: 74px; display: grid; grid-template-columns: 135px 135px; }
  .ttl { font-size: 15px; line-height: 19px; text-align: center; letter-spacing: .25px; }
  .donut { width: 104px; height: 104px; position: relative; margin: 8px auto 0; left: 1px; }
  .donut svg { display: block; }
  .dv { position: absolute; inset: 0; display: flex; align-items: center; justify-content: center; font-size: 16px; letter-spacing: .3px; }
  .lst { margin-top: 5px; padding-left: 15px; font-size: 15px; line-height: 19px; letter-spacing: .25px; white-space: nowrap; }
  .lr { display: flex; align-items: center; height: 19px; gap: 6px; }
  .lr2 { display: flex; align-items: flex-start; gap: 7px; }
  .lr2 .sq { margin-top: 1px; }
  .gapt { margin-top: 5px; }
  .sq { width: 16px; height: 16px; box-sizing: border-box; display: block; flex: none; }
  .sg { background: linear-gradient(#12cc12, #4fd04f 50%, #12cc12); border: 1px solid #0e860e; }
  .sk { background: linear-gradient(#4a4a4a, #0e1a0e); border: 1px solid #111; }
  .sr { background: linear-gradient(#e8484a, #c94020 60%, #bd430c); border: 1px solid #7a1010; }
  .avgcol { flex: 1; }
  .avgl { padding-right: 10px; }
  .diag { display: block; margin-top: 11px; }
  .d11 { font-size: 10.800px; letter-spacing: .05px; font-family: "Liberation Sans", Arial, sans-serif; }
  .d19 { font-size: 19px; font-family: "Liberation Sans", Arial, sans-serif; }
  .gf { fill: #1b8f25; } .rf { fill: #8c1414; }
  .hr { height: 1px; flex: none; margin: 0 20px; background: #7f95a0; }
  .mid { height: 104px; flex: none; display: flex; box-sizing: border-box; padding: 17px 0 0 92px; }
  .mitem { display: flex; }
  .i1 { width: 407px; }
  .mtxt { margin-left: 16px; padding-top: 10px; }
  .ml { font-size: 15px; line-height: 18px; letter-spacing: .25px; }
  .ms { font-size: 11px; line-height: 17px; white-space: nowrap; }
  .bot { flex: 1; display: flex; padding-top: 21px; box-sizing: border-box; min-height: 0; }
  .wf { width: 150px; height: 532px; box-sizing: border-box; border-right: 1px solid #7f95a3; padding: 90px 5px 0 0; }
  .wfd { margin-top: 6px; }
  .wfhr { height: 1px; background: #7f95a0; margin: 21px 0 0 21px; width: 108px; }
  .avgo { margin-top: 16px; }
  .doc { position: relative; margin: 8px 0 0 23px; width: 102px; height: 82px; }
  .doc svg { display: block; }
  .bubble { position: absolute; left: 41px; top: 26px; width: 61px; height: 50px; box-sizing: border-box; background: linear-gradient(#fff, #f2f4f5); border: 1px solid #c0c9ce; border-radius: 4px; display: flex; flex-direction: column; align-items: center; padding-top: 8px; }
  .bubble b { font-weight: normal; font-size: 18px; line-height: 22px; letter-spacing: .5px; color: #000; }
  .bubble span { font-size: 11px; line-height: 14px; }
  .gross { flex: 1; }
  .gross svg { display: block; }
  .grow { height: 26px; display: flex; align-items: center; padding-left: 240px; }
  .glab { font-size: 16px; letter-spacing: 0; width: 137px; white-space: nowrap; padding-top: 1px; }
  .sel { width: 90px; height: 25px; box-sizing: border-box; background: linear-gradient(#fff, #eef2f4); border: 1px solid #8aa0ad; border-radius: 3px; display: flex; align-items: center; justify-content: space-between; padding-left: 2px; font-size: 15px; letter-spacing: .3px; }
  .sel .ddbtn { width: 20px; height: 20px; margin-right: 2px; background: linear-gradient(#8fb0c4, #4f7c98); }
  .by { font-size: 11.500px; } .byb { font-size: 11.500px; font-weight: bold; }
  .status { margin: 11px 4px 0 5px; height: 17px; line-height: 17px; padding-left: 1px; background: linear-gradient(#d4eaf6, #aecde0); border: 0; flex: none; }
</style>
